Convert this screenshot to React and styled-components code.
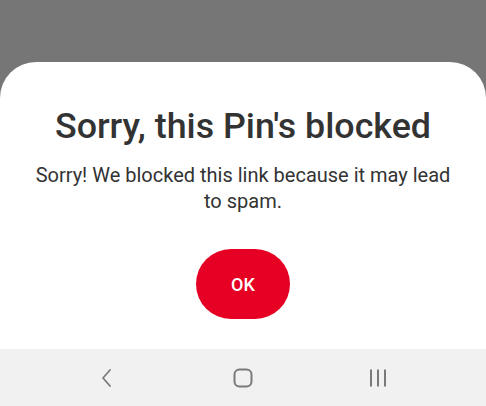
import styled, { createGlobalStyle } from 'styled-components';

const GlobalStyle = createGlobalStyle`
  html, body {
    margin: 0;
    padding: 0;
  }
  body {
    font-family: Roboto, 'Liberation Sans', sans-serif;
  }
`;

const Screen = styled.div`
  width: 486px;
  height: 406px;
  display: flex;
  flex-direction: column;
  background: #767676;
  overflow: hidden;
`;

const Scrim = styled.div`
  height: 62px;
  flex-shrink: 0;
`;

const Sheet = styled.div`
  flex: 1;
  background: #fff;
  border-radius: 36px 36px 0 0;
  display: flex;
  flex-direction: column;
  align-items: center;
  padding-top: 44px;
  box-sizing: border-box;
`;

const Title = styled.h1`
  margin: 0;
  font-family: Roboto, 'Liberation Sans', sans-serif;
  font-size: 35.8px;
  font-weight: 500;
  line-height: 41px;
  color: #333;
  text-align: center;
`;

const Message = styled.p`
  margin: 15px 0 0;
  padding: 0 30px;
  font-family: Roboto, 'Liberation Sans', sans-serif;
  font-size: 20px;
  font-weight: 400;
  line-height: 26px;
  color: #333;
  text-align: center;
`;

const OkButton = styled.button`
  margin-top: 35px;
  width: 94px;
  height: 70px;
  border: none;
  border-radius: 35px;
  background: #e60023;
  color: #fff;
  font-family: Roboto, 'Liberation Sans', sans-serif;
  font-size: 18px;
  font-weight: 500;
  cursor: pointer;
`;

const NavBar = styled.div`
  height: 57px;
  flex-shrink: 0;
  background: #f1f1f1;
  display: grid;
  grid-template-columns: repeat(3, 1fr);
  align-items: center;
  justify-items: center;
  padding: 0 40px;
`;

const NavIcon = styled.svg`
  width: 20px;
  height: 20px;
  color: #7a7a7a;
`;

function BackIcon() {
  return (
    <NavIcon viewBox="0 0 20 20" fill="none">
      <path d="M12 2 L5 10 L12 18" stroke="currentColor" strokeWidth="1.8" strokeLinecap="round" strokeLinejoin="round" />
    </NavIcon>
  );
}

function HomeIcon() {
  return (
    <NavIcon viewBox="0 0 20 20" fill="none">
      <rect x="1.5" y="1.5" width="17" height="17" rx="5" stroke="currentColor" strokeWidth="2" />
    </NavIcon>
  );
}

function RecentsIcon() {
  return (
    <NavIcon viewBox="0 0 20 20" fill="none">
      <path d="M3 1.5 V18.5 M10 1.5 V18.5 M17 1.5 V18.5" stroke="currentColor" strokeWidth="2" />
    </NavIcon>
  );
}

export default function App() {
  return (
    <>
      <GlobalStyle />
      <Screen>
        <Scrim />
        <Sheet>
          <Title>Sorry, this Pin's blocked</Title>
          <Message>Sorry! We blocked this link because it may lead to spam.</Message>
          <OkButton>OK</OkButton>
        </Sheet>
        <NavBar>
          <BackIcon />
          <HomeIcon />
          <RecentsIcon />
        </NavBar>
      </Screen>
    </>
  );
}
